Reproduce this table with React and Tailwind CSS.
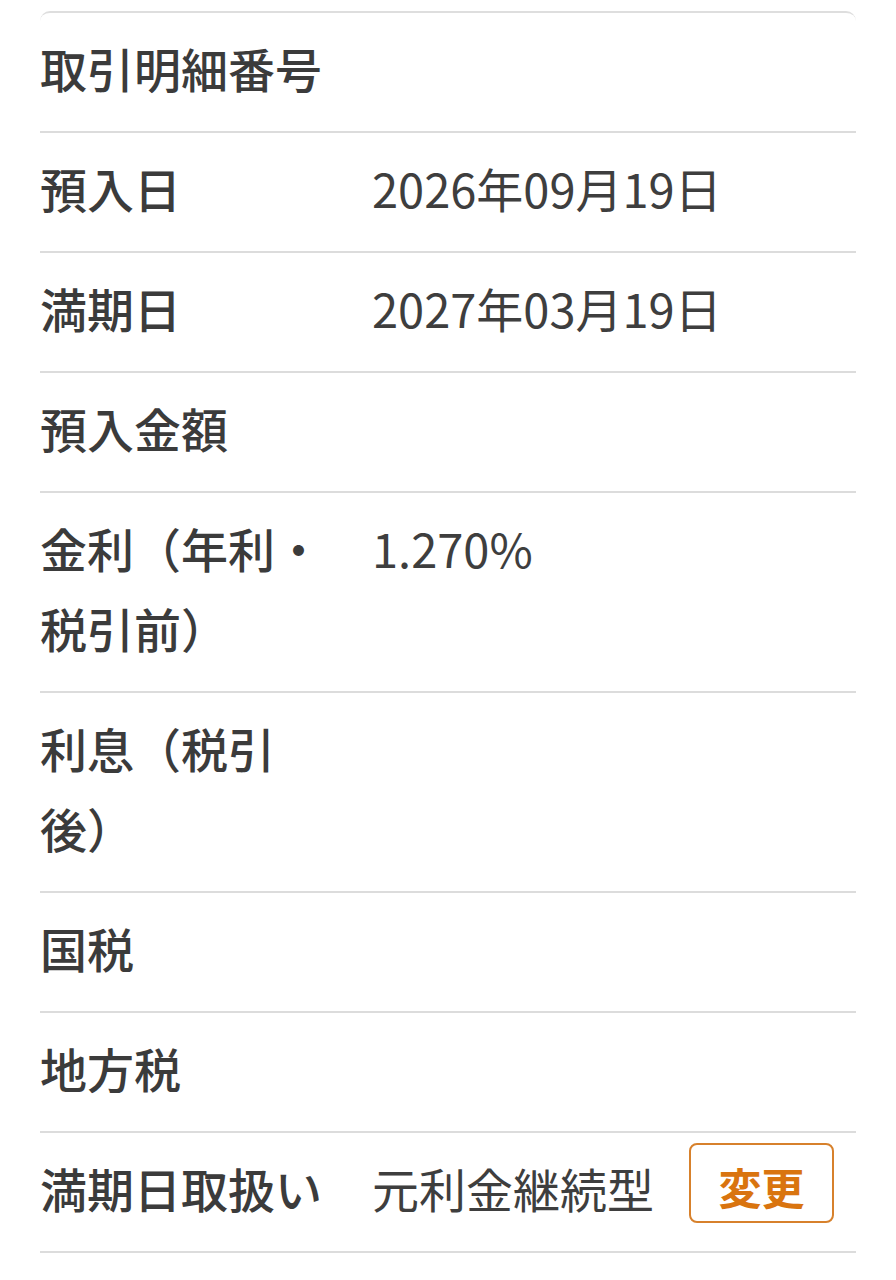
const rows = [
  { label: '取引明細番号', value: '' },
  { label: '預入日', value: '2026年09月19日' },
  { label: '満期日', value: '2027年03月19日' },
  { label: '預入金額', value: '' },
  { label: '金利（年利・税引前）', value: '1.270%' },
  { label: '利息（税引後）', value: '' },
  { label: '国税', value: '' },
  { label: '地方税', value: '' },
];

function Row({ label, children }) {
  return (
    <div className="flex items-start border-b-2 border-[#dcdcdc] pt-[15px] pb-[23px]">
      <div className="w-[295px] shrink-0 font-medium leading-[80px] text-[#3b3b3b]">{label}</div>
      <div className="ml-[37px] flex flex-1 items-center leading-[80px] text-[#3e3e3e]">{children}</div>
    </div>
  );
}

export default function App() {
  return (
    <div
      className="min-h-[1280px] bg-white px-[40px] pt-[11px] text-[47px]"
      style={{ fontFamily: '"Noto Sans CJK JP", "Noto Sans", sans-serif' }}
    >
      <div className="rounded-t-[10px] border-t-2 border-[#dedede]">
        {rows.map((r) => (
          <Row key={r.label} label={r.label}>
            {r.value}
          </Row>
        ))}
        {/* 満期日取扱い + 変更 button */}
        <Row label="満期日取扱い">
          <span>元利金継続型</span>
          <button className="ml-[35px] h-[80px] w-[145px] -translate-y-[5px] rounded-[8px] border-2 border-[#d7812c] pt-[6px] text-[43px] font-bold leading-none text-[#d9740f]">
            変更
          </button>
        </Row>
      </div>
    </div>
  );
}
